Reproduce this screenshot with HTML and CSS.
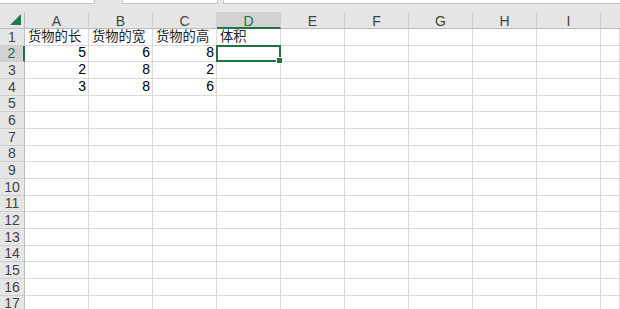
FILE: index.html
```html
<!DOCTYPE html>
<html lang="zh">
<head>
<meta charset="utf-8">
<link rel="stylesheet" href="styles.css">
</head>
<body>
<div class="topbar">
  <div class="box b1"></div>
  <div class="box b2"></div>
  <div class="box b3"></div>
</div>
<div class="sheet">
  <div class="corner"><span class="tri"></span></div>
  <div class="ch">A</div><div class="ch">B</div><div class="ch">C</div><div class="ch sel">D</div><div class="ch">E</div><div class="ch">F</div><div class="ch">G</div><div class="ch">H</div><div class="ch">I</div><div class="ch last"></div>

  <div class="rh">1</div><div class="c t">货物的长</div><div class="c t">货物的宽</div><div class="c t">货物的高</div><div class="c t">体积</div><div class="c"></div><div class="c"></div><div class="c"></div><div class="c"></div><div class="c"></div><div class="c"></div>
  <div class="rh sel">2</div><div class="c n">5</div><div class="c n">6</div><div class="c n">8</div><div class="c active"></div><div class="c"></div><div class="c"></div><div class="c"></div><div class="c"></div><div class="c"></div><div class="c"></div>
  <div class="rh">3</div><div class="c n">2</div><div class="c n">8</div><div class="c n">2</div><div class="c"></div><div class="c"></div><div class="c"></div><div class="c"></div><div class="c"></div><div class="c"></div><div class="c"></div>
  <div class="rh">4</div><div class="c n">3</div><div class="c n">8</div><div class="c n">6</div><div class="c"></div><div class="c"></div><div class="c"></div><div class="c"></div><div class="c"></div><div class="c"></div><div class="c"></div>
  <div class="rh">5</div><div class="c"></div><div class="c"></div><div class="c"></div><div class="c"></div><div class="c"></div><div class="c"></div><div class="c"></div><div class="c"></div><div class="c"></div><div class="c"></div>
  <div class="rh">6</div><div class="c"></div><div class="c"></div><div class="c"></div><div class="c"></div><div class="c"></div><div class="c"></div><div class="c"></div><div class="c"></div><div class="c"></div><div class="c"></div>
  <div class="rh">7</div><div class="c"></div><div class="c"></div><div class="c"></div><div class="c"></div><div class="c"></div><div class="c"></div><div class="c"></div><div class="c"></div><div class="c"></div><div class="c"></div>
  <div class="rh">8</div><div class="c"></div><div class="c"></div><div class="c"></div><div class="c"></div><div class="c"></div><div class="c"></div><div class="c"></div><div class="c"></div><div class="c"></div><div class="c"></div>
  <div class="rh">9</div><div class="c"></div><div class="c"></div><div class="c"></div><div class="c"></div><div class="c"></div><div class="c"></div><div class="c"></div><div class="c"></div><div class="c"></div><div class="c"></div>
  <div class="rh">10</div><div class="c"></div><div class="c"></div><div class="c"></div><div class="c"></div><div class="c"></div><div class="c"></div><div class="c"></div><div class="c"></div><div class="c"></div><div class="c"></div>
  <div class="rh">11</div><div class="c"></div><div class="c"></div><div class="c"></div><div class="c"></div><div class="c"></div><div class="c"></div><div class="c"></div><div class="c"></div><div class="c"></div><div class="c"></div>
  <div class="rh">12</div><div class="c"></div><div class="c"></div><div class="c"></div><div class="c"></div><div class="c"></div><div class="c"></div><div class="c"></div><div class="c"></div><div class="c"></div><div class="c"></div>
  <div class="rh">13</div><div class="c"></div><div class="c"></div><div class="c"></div><div class="c"></div><div class="c"></div><div class="c"></div><div class="c"></div><div class="c"></div><div class="c"></div><div class="c"></div>
  <div class="rh">14</div><div class="c"></div><div class="c"></div><div class="c"></div><div class="c"></div><div class="c"></div><div class="c"></div><div class="c"></div><div class="c"></div><div class="c"></div><div class="c"></div>
  <div class="rh">15</div><div class="c"></div><div class="c"></div><div class="c"></div><div class="c"></div><div class="c"></div><div class="c"></div><div class="c"></div><div class="c"></div><div class="c"></div><div class="c"></div>
  <div class="rh">16</div><div class="c"></div><div class="c"></div><div class="c"></div><div class="c"></div><div class="c"></div><div class="c"></div><div class="c"></div><div class="c"></div><div class="c"></div><div class="c"></div>
  <div class="rh">17</div><div class="c"></div><div class="c"></div><div class="c"></div><div class="c"></div><div class="c"></div><div class="c"></div><div class="c"></div><div class="c"></div><div class="c"></div><div class="c"></div>
</div>
</body>
</html>
```
FILE: styles.css
```css
* { box-sizing: border-box; }
html, body { margin: 0; padding: 0; }
body {
  width: 620px;
  height: 309px;
  overflow: hidden;
  background: #ffffff;
  font-family: "Liberation Sans", "Noto Sans CJK SC", sans-serif;
  font-size: 13px;
  color: #000;
}
.topbar {
  height: 12px;
  background: #e6e6e6;
  display: flex;
  align-items: flex-start;
}
.box {
  height: 4px;
  background: #ffffff;
  border: 1px solid #c6c6c6;
  border-top: none;
}
.b1 { width: 95px; border-left: none; }
.b2 { width: 96px; margin-left: 27px; }
.b3 { flex: 1; margin-left: 5px; border-right: none; }

.sheet {
  display: grid;
  grid-template-columns: 25px repeat(9, 64px) 1fr;
  grid-template-rows: 17px repeat(17, 16.667px);
}
.corner {
  background: #e6e6e6;
  border-right: 1px solid #bdbdbd;
  border-bottom: 1px solid #bdbdbd;
  display: flex;
  justify-content: flex-end;
  align-items: flex-end;
  padding: 0 3px 3px 0;
}
.tri {
  width: 0;
  height: 0;
  border-left: 11px solid transparent;
  border-bottom: 11px solid #227a45;
}
.ch {
  background: #e6e6e6;
  border-right: 1px solid #cfcfcf;
  border-bottom: 1px solid #bdbdbd;
  color: #444;
  display: flex;
  justify-content: center;
  align-items: center;
  padding-top: 1px;
  font-size: 14px;
}
.ch.last { border-right: none; }
.ch.sel {
  background: #d2d2d2;
  color: #217346;
  border-bottom: 2px solid #217346;
  padding-top: 2px;
}
.rh {
  background: #e6e6e6;
  border-right: 1px solid #bdbdbd;
  border-bottom: 1px solid #cfcfcf;
  color: #444;
  display: flex;
  justify-content: center;
  align-items: flex-end;
  font-size: 14px;
  line-height: 15px;
}
.rh.sel {
  background: #d2d2d2;
  color: #217346;
  border-right: 2px solid #217346;
}
.c {
  background: #fff;
  border-right: 1px solid #dadada;
  border-bottom: 1px solid #dadada;
  display: flex;
  align-items: flex-end;
  padding: 0 2px 1px 2px;
  line-height: 15px;
  white-space: nowrap;
}
.c.t { padding-left: 3px; font-size: 13.3px; color: #222; }
.c.n { justify-content: flex-end; font-size: 14px; }
.c.active { position: relative; }
.c.active::after {
  content: "";
  position: absolute;
  left: -1px;
  top: -1px;
  right: -1px;
  bottom: -1px;
  border: 2px solid #217346;
}
.c.active::before {
  content: "";
  position: absolute;
  right: -3px;
  bottom: -3px;
  width: 5px;
  height: 5px;
  background: #217346;
  border: 1px solid #fff;
  z-index: 2;
  box-sizing: content-box;
}
```
